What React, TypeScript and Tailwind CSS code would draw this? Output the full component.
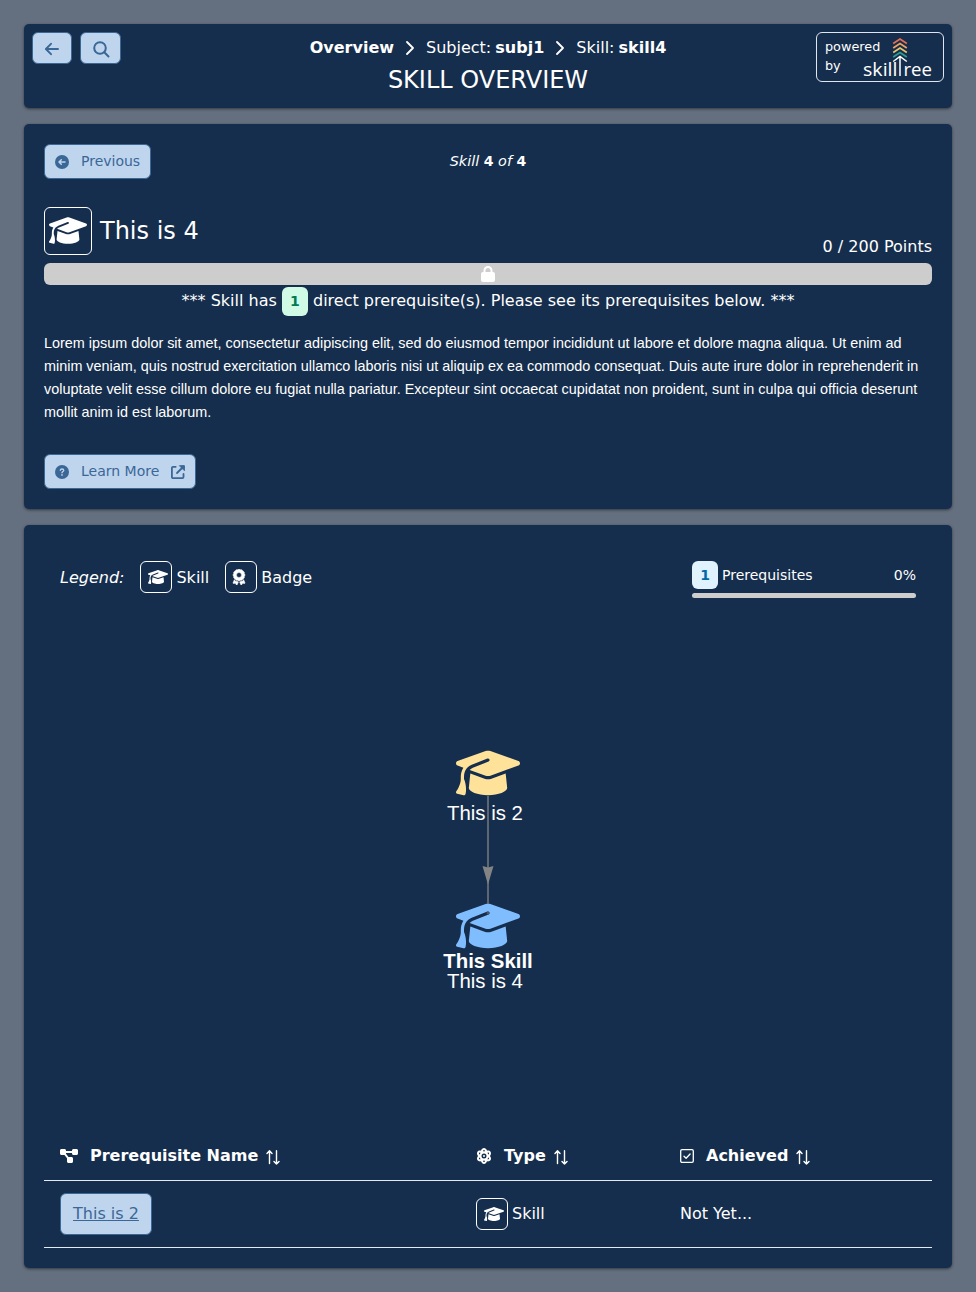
import type { ReactNode } from "react";
import { FaAtom, FaAward, FaDiagramProject, FaGraduationCap, FaLock } from "react-icons/fa6";

const cardClass = "rounded-[5px] bg-[#162e4d] shadow-[0_1px_3px_rgba(0,0,0,0.5)]";
const buttonClass =
  "flex items-center rounded-[6px] border border-[#3b6796] bg-[#bfd5ee] text-sm text-[#3b6796]";

function ArrowLeftIcon() {
  return (
    <svg width="14" height="14" viewBox="0 0 14 14" fill="none" stroke="currentColor" strokeWidth="1.9" strokeLinecap="round" strokeLinejoin="round" className="mt-[2px]">
      <path d="M13 7H1M6 1.8.9 7 6 12.2" />
    </svg>
  );
}

function SearchIcon() {
  return (
    <svg width="17" height="17" viewBox="0 0 17 17" fill="none" stroke="currentColor" strokeWidth="2" strokeLinecap="round" className="mt-[2px] ml-[2px]">
      <circle cx="7" cy="7" r="5.8" />
      <path d="m11.3 11.3 4.2 4.2" />
    </svg>
  );
}

function Chevron() {
  return (
    <svg width="8" height="14" viewBox="0 0 8 14" fill="none" stroke="currentColor" strokeWidth="1.8" strokeLinecap="round" strokeLinejoin="round">
      <path d="m1 1 6 6-6 6" />
    </svg>
  );
}

function CirclePreviousIcon() {
  return (
    <svg width="14" height="14" viewBox="0 0 14 14" fill="none" strokeLinecap="round" strokeLinejoin="round" className="mt-[1px]">
      <circle cx="7" cy="7" r="7" fill="currentColor" />
      <path d="M10 7H4.500M6.300 4.700 4 7l2.300 2.300" stroke="#bfd5ee" strokeWidth="1.500" />
    </svg>
  );
}

function CircleQuestionIcon() {
  return (
    <svg width="14" height="14" viewBox="0 0 14 14" fill="none" strokeLinecap="round" strokeLinejoin="round" className="mt-[1px]">
      <circle cx="7" cy="7" r="7" fill="currentColor" />
      <path d="M5.300 5.300c.1-1 .8-1.300 1.700-1.300 1 0 1.800.5 1.800 1.400C8.800 6.500 7 6.600 7 7.800" stroke="#bfd5ee" strokeWidth="1.300" />
      <circle cx="7" cy="9.900" r=".85" fill="#bfd5ee" />
    </svg>
  );
}

function ExternalIcon() {
  return (
    <svg width="14" height="14" viewBox="0 0 14 14" fill="none" stroke="currentColor" strokeWidth="1.8" strokeLinejoin="round" strokeLinecap="round" className="mt-[1px]">
      <path d="M4.7 1.8H2A1.1 1.1 0 0 0 .9 2.9V12A1.1 1.1 0 0 0 2 13.1H11.4A1.1 1.1 0 0 0 12.5 12V9" />
      <path d="m6 8 6.5-6.5" />
      <path d="M8.8.7h4.600v4.600Z" fill="currentColor" strokeWidth="1" />
    </svg>
  );
}

function CheckSquareIcon() {
  return (
    <svg width="14" height="14" viewBox="0 0 14 14" fill="none" stroke="currentColor" strokeWidth="1.3" strokeLinejoin="round" strokeLinecap="round">
      <rect x=".7" y=".7" width="12.600" height="12.600" rx="1.300" />
      <path d="m4 7.200 2.100 2.100 4-4.300" />
    </svg>
  );
}

function SortIcon() {
  return (
    <svg width="14" height="15" viewBox="0 0 14 15" fill="none" stroke="currentColor" strokeWidth="1.4" strokeLinecap="round" strokeLinejoin="round" className="mt-[3px]">
      <path d="M3.500 13.500V1M1 3.400 3.500.800 6 3.400M10.500.800v13.200M8 11.500l2.500 2.600 2.500-2.600" />
    </svg>
  );
}

function SkillTreeLogo() {
  return (
    <svg width="70" height="42" viewBox="0 0 70 42" fill="none" className="-ml-[18px] shrink-0">
      <g strokeWidth="1.700">
        <path d="m30.200 6.500 6.800-4.500 6.800 4.500" stroke="#e76f51" />
        <path d="m30.200 11 6.800-4.500 6.800 4.500" stroke="#f4a261" />
        <path d="m30.200 15.500 6.800-4.500 6.800 4.500" stroke="#e9c46a" />
        <path d="m30.200 20 6.800-4.500 6.800 4.500" stroke="#2a9d8f" />
        <path d="m30.200 24.500 6.800-5 6.800 5M37 20V39" stroke="#fff" strokeWidth="1.500" />
      </g>
      <g fill="#fff" fontFamily="Open Sans, Noto Sans, sans-serif" fontSize="18">
        <text x="0" y="39" textLength="34.500" lengthAdjust="spacingAndGlyphs">skill</text>
        <text x="40.500" y="39" textLength="28.500" lengthAdjust="spacingAndGlyphs">ree</text>
      </g>
    </svg>
  );
}

function IconBox({ children }: { children: ReactNode }) {
  return (
    <span className="flex size-8 items-center justify-center rounded-[6px] border border-white">{children}</span>
  );
}

function Header() {
  return (
    <header className={`${cardClass} grid h-[84px] grid-cols-[128px_1fr_128px] p-2`}>
      <div className="flex gap-2">
        <button className={`${buttonClass} h-8 w-10 justify-center`}><ArrowLeftIcon /></button>
        <button className={`${buttonClass} h-8 w-[41px] justify-center`}><SearchIcon /></button>
      </div>
      <div className="flex flex-col items-center">
        <nav className="mt-1 flex h-6 items-center text-base leading-6 whitespace-nowrap">
          <b>Overview</b>
          <span className="mx-3"><Chevron /></span>
          <span>Subject: <b className="-ml-[1px]">subj1</b></span>
          <span className="mx-3"><Chevron /></span>
          <span>Skill: <b className="-ml-[1px]">skill4</b></span>
        </nav>
        <h1 className="mt-[3px] text-2xl leading-[34px]">SKILL OVERVIEW</h1>
      </div>
      <div className="flex h-[50px] rounded-[6px] border border-[#dfe6ee] pt-1 pl-2">
        <div className="flex w-14 shrink-0 flex-col items-start text-[12.8px] leading-[19.200px]"><span>powered</span><span>by</span></div>
        <SkillTreeLogo />
      </div>
    </header>
  );
}

function SkillDetails() {
  return (
    <section className={`${cardClass} h-[385px] p-5`}>
      <div className="grid grid-cols-3 items-center">
        <button className={`${buttonClass} h-[35px] w-[107px] pb-[1px] pl-[10px]`}>
          <CirclePreviousIcon /><span className="ml-3">Previous</span>
        </button>
        <div className="pb-[2px] text-center text-[14.4px] leading-5 italic">Skill <b className="text-sm not-italic">4</b> of <b className="text-sm not-italic">4</b></div>
      </div>
      <div className="mt-7 flex h-12 justify-between">
        <div className="flex items-center">
          <span className="flex size-12 items-center justify-center rounded-[6px] border border-white pb-[1px]"><FaGraduationCap className="h-[31px] w-[38px]" /></span>
          <h2 className="ml-2 text-2xl">This is 4</h2>
        </div>
        <div className="self-end leading-4">0 / 200 Points</div>
      </div>
      <div className="mt-2 flex h-[22px] items-center justify-center rounded-[6px] bg-[#cdcdcd]">
        <FaLock className="h-4 w-[14px]" preserveAspectRatio="none" />
      </div>
      <div className="mt-[1.500px] flex h-[29px] items-center justify-center whitespace-pre">
        <span>*** Skill has </span>
        <span className="flex h-[29px] w-[26px] items-center justify-center rounded-[6px] bg-[#d0fae5] text-sm font-bold text-[#007a55]">1</span>
        <span> direct prerequisite(s). Please see its prerequisites below. ***</span>
      </div>
      <p className="mt-4 font-['Liberation_Sans',sans-serif] text-[14.400px] leading-[23px]">
        Lorem ipsum dolor sit amet, consectetur adipiscing elit, sed do eiusmod tempor incididunt ut labore et dolore magna aliqua. Ut enim ad minim veniam, quis nostrud exercitation ullamco laboris nisi ut aliquip ex ea commodo consequat. Duis aute irure dolor in reprehenderit in voluptate velit esse cillum dolore eu fugiat nulla pariatur. Excepteur sint occaecat cupidatat non proident, sunt in culpa qui officia deserunt mollit anim id est laborum.
      </p>
      <button className={`${buttonClass} mt-[30px] h-[35px] w-[152px] pl-[10px]`}>
        <CircleQuestionIcon /><span className="mr-3 ml-3">Learn More</span><ExternalIcon />
      </button>
    </section>
  );
}

function PrerequisiteGraph() {
  return (
    <svg width="888" height="531" viewBox="0 0 888 531" className="block">
      <g transform="translate(412 151.500)" color="#ffe299"><FaGraduationCap size={64} viewBox="0 32 640 640" /></g>
      <g transform="translate(412 304.500)" color="#80bdff"><FaGraduationCap size={64} viewBox="0 32 640 640" /></g>
      <path d="M444 197V305" stroke="#848484" strokeOpacity=".65" strokeWidth="2" />
      <circle cx="444" cy="314" r="1.500" fill="#4b5767" />
      <path d="m438.500 267 5.500 1.500 5.500-1.500-5.500 18.500Z" fill="#848484" />
      <g fill="#fff" fontFamily="Liberation Sans, sans-serif" fontSize="20.400" textAnchor="middle">
        <text x="441" y="221">This is 2</text>
        <text x="444" y="369" fontWeight="bold">This Skill</text>
        <text x="441" y="389">This is 4</text>
      </g>
    </svg>
  );
}

function Prerequisites() {
  return (
    <section className={`${cardClass} h-[743px] px-5 pt-9`}>
      <div className="flex h-[38px] justify-between px-4">
        <div className="flex h-8 items-center">
          <i className="mt-[2px] mr-4">Legend:</i>
          <IconBox><FaGraduationCap className="ml-1 h-4 w-5" /></IconBox><span className="mt-[2px] mr-4 ml-1">Skill</span>
          <IconBox><FaAward size={16} className="-ml-1" stroke="currentColor" strokeWidth="16" /></IconBox><span className="mt-[2px] ml-1">Badge</span>
        </div>
        <div className="w-56 text-sm">
          <div className="flex h-7 items-center">
            <span className="flex h-7 w-[26px] items-center justify-center rounded-[6px] bg-[#dff2fe] font-bold text-[#0069a8]">1</span>
            <span className="ml-1">Prerequisites</span><span className="ml-auto">0%</span>
          </div>
          <div className="mt-1 h-[5px] rounded-[3px] bg-[#cdcdcd]" />
        </div>
      </div>
      <PrerequisiteGraph />
      <table className="w-full table-fixed border-collapse">
        <colgroup><col className="w-[416px]" /><col className="w-[204px]" /><col /></colgroup>
        <thead>
          <tr className="h-[50px] border-b border-[#e4eaf1] text-left font-bold">
            <th className="px-4 pt-[2px]"><div className="flex items-center"><FaDiagramProject className="h-4 w-[18px]" /><span className="mr-2 ml-3">Prerequisite Name</span><SortIcon /></div></th>
            <th className="px-4 pt-[2px]"><div className="flex items-center"><FaAtom size={16} /><span className="mr-2 ml-3">Type</span><SortIcon /></div></th>
            <th className="px-4 pt-[2px]"><div className="flex items-center"><CheckSquareIcon /><span className="mr-2 ml-3">Achieved</span><SortIcon /></div></th>
          </tr>
        </thead>
        <tbody>
          <tr className="h-[67px] border-b border-[#e4eaf1]">
            <td className="px-4"><a className={`${buttonClass} h-[42px] w-[92px] justify-center`}><span className="text-base underline">This is 2</span></a></td>
            <td className="px-4"><div className="flex items-center"><IconBox><FaGraduationCap className="ml-1 h-4 w-5" /></IconBox><span className="ml-1">Skill</span></div></td>
            <td className="px-4">Not Yet...</td>
          </tr>
        </tbody>
      </table>
    </section>
  );
}

export default function App() {
  return (
    <main className="flex min-h-[1292px] flex-col gap-4 bg-[#646f7f] p-6 font-['DejaVu_Sans',sans-serif] text-base text-white">
      <Header />
      <SkillDetails />
      <Prerequisites />
    </main>
  );
}
